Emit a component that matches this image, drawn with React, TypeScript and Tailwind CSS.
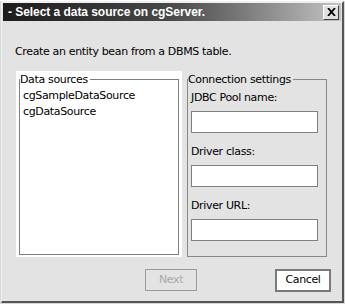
import React from "react";

const font = "font-['Tahoma','DejaVu_Sans',sans-serif]";

function TextField() {
  return (
    <div className="h-[22px] w-[127px] border border-[#7f7f7f] bg-white" />
  );
}

export default function App() {
  return (
    <div className={`w-[345px] h-[304px] bg-[#d8d8d8] ${font}`}>
      <div className="w-[343px] h-[302px] ml-px mt-px border-t-2 border-l border-r-2 border-b-2 border-t-[#f0f0f0] border-l-[#f0f0f0] border-r-[#555] border-b-[#555] bg-[#e3e3e3] flex flex-col">
        {/* Title bar */}
        <div className="mx-px h-[18px] flex items-center justify-between bg-gradient-to-r from-[#1c1c1c] via-[#4a4a4a] to-[#c4c4c4] pl-[5px] pr-[2px]">
          <span className="text-white font-bold text-[12px] leading-none tracking-[-0.05px] font-['Liberation_Sans',sans-serif]">
            - Select a data source on cgServer.
          </span>
          <div className="w-[16px] h-[15px] bg-[#e0e0e0] border border-t-white border-l-white border-r-[#404040] border-b-[#404040] flex items-center justify-center">
            <svg width="9" height="8" viewBox="0 0 9 8">
              <path d="M1 0 L8 8 M8 0 L1 8" stroke="#000" strokeWidth="1.8" />
            </svg>
          </div>
        </div>

        <p className="mt-[24px] ml-[13px] text-[11px] leading-[13px] text-black font-['DejaVu_Sans',sans-serif] tracking-[-0.35px]">
          Create an entity bean from a DBMS table.
        </p>

        <div className="mt-[13px] ml-[14px] flex gap-[5px]">
          {/* Data sources */}
          <div className="w-[166px] h-[186px] bg-white px-[3px] pt-[2px] pb-[2px]">
            <fieldset className="h-full border border-[#808080] pl-0">
              <legend className="pr-[2px] text-[11px] leading-[13px] tracking-[-0.35px] font-['DejaVu_Sans',sans-serif]">
                Data sources
              </legend>
              <ul className="px-[3px] pt-[2px] text-[11px] leading-[16px] tracking-[-0.35px] font-['DejaVu_Sans',sans-serif]">
                <li>cgSampleDataSource</li>
                <li>cgDataSource</li>
              </ul>
            </fieldset>
          </div>

          {/* Connection settings */}
          <fieldset className="w-[140px] h-[184px] mt-[2px] border border-[#888] pl-0">
            <legend className="pr-[2px] text-[11px] leading-[13px] tracking-[-0.35px] font-['DejaVu_Sans',sans-serif]">
              Connection settings
            </legend>
            <div className="pl-[3px] pt-[5px] flex flex-col text-[11px] leading-[13px] tracking-[-0.35px] font-['DejaVu_Sans',sans-serif]">
              <span>JDBC Pool name:</span>
              <div className="mt-[7px]">
                <TextField />
              </div>
              <span className="mt-[12px]">Driver class:</span>
              <div className="mt-[7px]">
                <TextField />
              </div>
              <span className="mt-[12px]">Driver URL:</span>
              <div className="mt-[7px]">
                <TextField />
              </div>
            </div>
          </fieldset>
        </div>

        <div className="mt-[12px] flex">
          <div className="ml-[143px] w-[52px] h-[22px] border border-[#9a9a9a] flex items-center justify-center text-[11px] text-[#a8a8a8] tracking-[-0.35px] font-['DejaVu_Sans',sans-serif]">
            Next
          </div>
          <div className="ml-[78px] w-[56px] h-[23px] border-2 border-[#7a7a7a] bg-white flex items-center justify-center text-[11px] text-black tracking-[-0.35px] font-['DejaVu_Sans',sans-serif]">
            Cancel
          </div>
        </div>
      </div>
    </div>
  );
}
